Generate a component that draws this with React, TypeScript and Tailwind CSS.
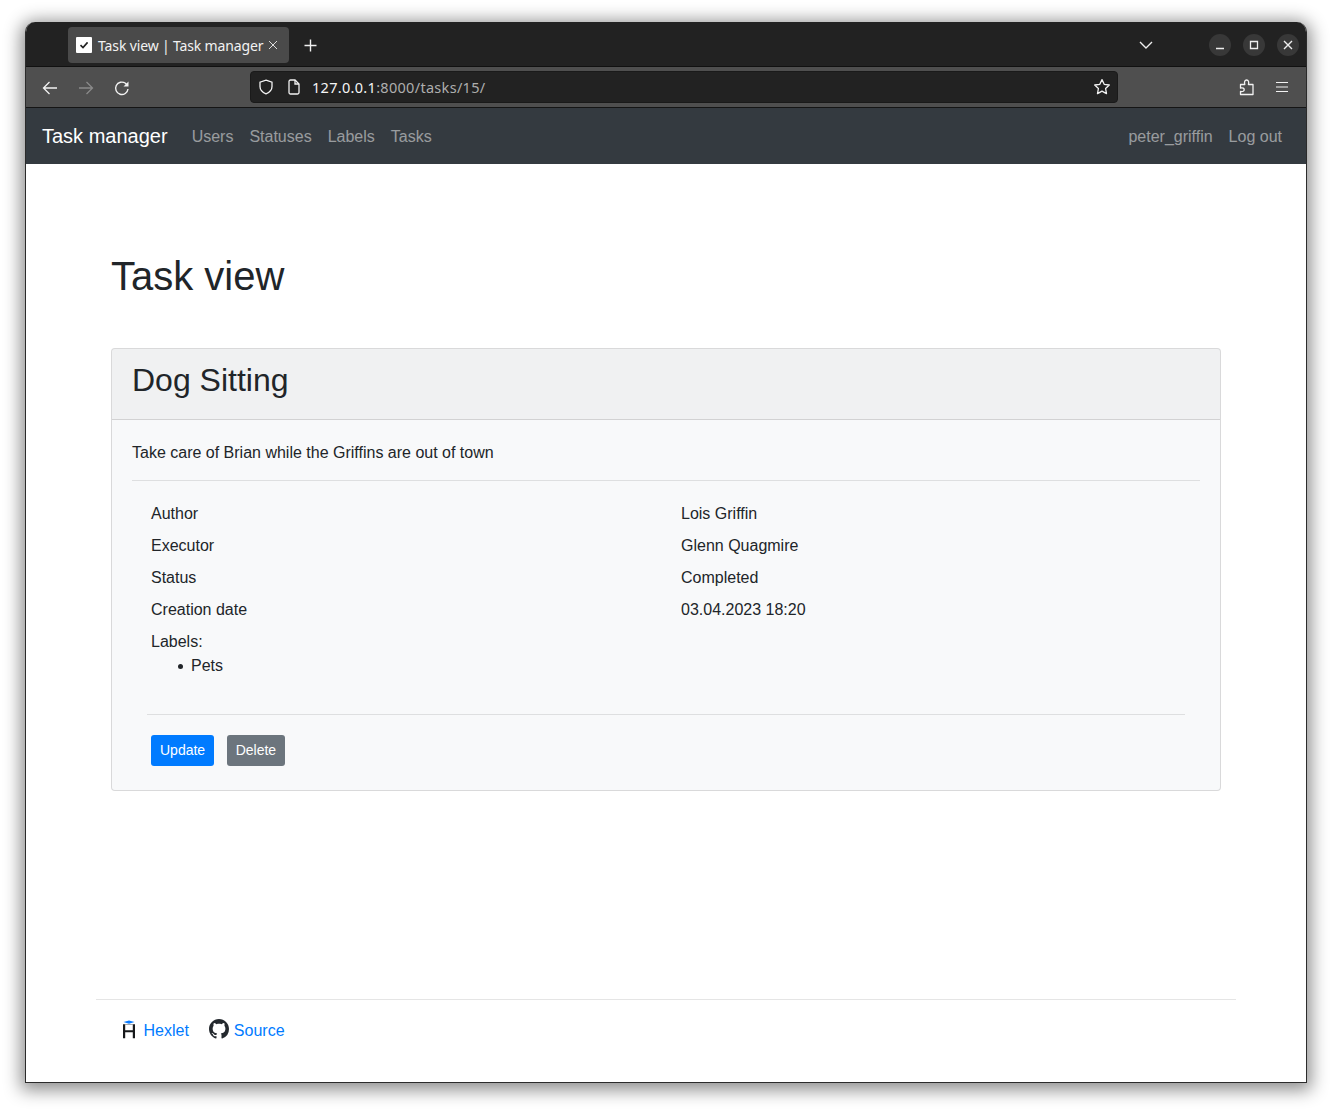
import React from "react";

const Row = ({ a, b }: { a: string; b: string }) => (
  <div className="grid grid-cols-[530px_1fr] h-8 items-center">
    <div className="pl-[4px]">{a}</div>
    <div className="pl-[4px]">{b}</div>
  </div>
);

export default function App() {
  return (
    <div className="w-[1332px] h-[1111px] bg-white pt-[22px] pl-[25px] overflow-hidden font-['Liberation_Sans',Arial,sans-serif] text-[16px] text-[#212529]">
      <div className="w-[1282px] h-[1061px] flex flex-col rounded-t-[10px] overflow-hidden border border-t-0 border-[#2b2b2b] bg-white shadow-[0_3px_17px_4px_rgba(0,0,0,0.45)]">
        {/* title bar */}
        <div className="h-[45px] shrink-0 bg-[#222222] border-b border-[#111111] flex items-start pl-[42px] relative">
          <div className="mt-[5px] w-[221px] h-[36px] rounded-[4px] bg-[#4a4a4a] flex items-center pl-[8px] text-white">
            <div className="w-4 h-4 bg-white rounded-[1px] flex items-center justify-center">
              <svg width="10" height="10" viewBox="0 0 10 10" fill="none" stroke="#222" strokeWidth="1.6"><path d="M1.5 5.2 4 7.6 8.6 2.4" /></svg>
            </div>
            <span className="ml-[6px] text-[14px] tracking-[-0.1px] [word-spacing:-0.2px] whitespace-nowrap font-['Noto_Sans',sans-serif] text-[#f2f2f2]">Task view | Task manager</span>
            <svg className="ml-[4px] -mt-[1px]" width="10" height="10" viewBox="0 0 10 10" stroke="#ddd" strokeWidth="1"><path d="M1 1l8 8M9 1 1 9" /></svg>
          </div>
          <svg className="ml-[15px] mt-[17px]" width="13" height="13" viewBox="0 0 13 13" stroke="#f0f0f0" strokeWidth="1.4"><path d="M6.5 0.5v12M0.5 6.5h12" /></svg>
          <svg className="absolute left-[1113px] top-[19px]" width="14" height="9" viewBox="0 0 14 9" fill="none" stroke="#eee" strokeWidth="1.4"><path d="M1 1l6 6 6-6" /></svg>
          <div className="absolute right-[7px] top-[12px] flex gap-[12px]">
            <div className="w-[22px] h-[22px] rounded-full bg-[#383838] flex items-center justify-center">
              <svg width="10" height="10" viewBox="0 0 10 10" stroke="#eee" strokeWidth="1.3"><path d="M1 8.5h8" /></svg>
            </div>
            <div className="w-[22px] h-[22px] rounded-full bg-[#383838] flex items-center justify-center">
              <svg width="10" height="10" viewBox="0 0 10 10" fill="none" stroke="#eee" strokeWidth="1.3"><path d="M1.5 1.5h7v7h-7z" /></svg>
            </div>
            <div className="w-[22px] h-[22px] rounded-full bg-[#383838] flex items-center justify-center">
              <svg width="10" height="10" viewBox="0 0 10 10" stroke="#eee" strokeWidth="1.4"><path d="M1 1l8 8M9 1 1 9" /></svg>
            </div>
          </div>
        </div>
        {/* toolbar */}
        <div className="h-[41px] shrink-0 bg-[#4f4f4f] border-b border-[#151515] flex items-center relative">
          <svg className="ml-[16px] mt-[1px]" width="16" height="16" viewBox="0 0 16 16" fill="none" stroke="#f2f2f2" strokeWidth="1.3"><path d="M15 8H1.5M7.5 2 1.5 8l6 6" /></svg>
          <svg className="ml-[20px] mt-[1px]" width="16" height="16" viewBox="0 0 16 16" fill="none" stroke="#8a8a8a" strokeWidth="1.3"><path d="M1 8h13.5M8.5 2l6 6-6 6" /></svg>
          <svg className="ml-[20px] mt-[1px]" width="16" height="16" viewBox="0 0 16 16" fill="none" stroke="#f2f2f2" strokeWidth="1.4"><path d="M14 9A6.2 6.2 0 1 1 11.5 3.3L13 5" /><path d="M14.5 1.5V6.5H9.5z" fill="#f2f2f2" stroke="none" /></svg>
          <div className="ml-[120px] w-[868px] h-[32px] rounded-[4px] bg-[#222222] border border-[#1a1a1a] flex items-center">
            <svg className="ml-[7px]" width="16" height="16" viewBox="0 0 16 16" fill="none" stroke="#f2f2f2" strokeWidth="1.3"><path d="M8 1.2 14 3.2v4.3c0 3.4-2.6 5.9-6 7.3-3.4-1.4-6-3.9-6-7.3V3.2z" /></svg>
            <svg className="ml-[13px]" width="14" height="16" viewBox="0 0 14 16" fill="none" stroke="#f2f2f2" strokeWidth="1.3"><path d="M2 2.5A1.5 1.5 0 0 1 3.5 1H8l4 4v8.5a1.5 1.5 0 0 1-1.5 1.5h-7A1.5 1.5 0 0 1 2 13.5z" /><path d="M8 1v4h4" /></svg>
            <span className="ml-[11px] mt-[1px] text-[14.5px] font-['Noto_Sans',sans-serif] tracking-[0.3px] text-[#f5f5f5]">127.0.0.1<span className="text-[#aeaeae]">:8000/tasks/15/</span></span>
            <svg className="ml-auto mr-[6px]" width="18" height="18" viewBox="0 0 18 18" fill="none" stroke="#f2f2f2" strokeWidth="1.3" strokeLinejoin="round"><path d="M9 1.6 11.2 6.3 16.3 7 12.6 10.5 13.5 15.6 9 13.1 4.5 15.6 5.4 10.5 1.7 7 6.8 6.3z" /></svg>
          </div>
          <svg className="ml-[121px]" width="16" height="17" viewBox="0 0 16 17" fill="none" stroke="#f2f2f2" strokeWidth="1.3" strokeLinejoin="round"><path d="M1.5 5.5H5.8C5 3 5.8 1 7.6 1S10.2 3 9.4 5.5H14V15.5H1.5V12.5C4 13 5.2 12 5.2 10.7S4 8.5 1.5 9z" /></svg>
          <svg className="ml-[21px]" width="12" height="12" viewBox="0 0 12 12" stroke="#f2f2f2" strokeWidth="1.2"><path d="M0 1.5h12M0 6h12M0 10.5h12" /></svg>
        </div>
        {/* navbar */}
        <nav className="h-[56px] shrink-0 bg-[#343a40] flex items-center pl-[16px] pr-[24px]">
          <span className="text-[20px] text-white mr-[24px]">Task manager</span>
          <div className="flex gap-[16px] text-[#ffffff80] pt-[2px]">
            <span>Users</span><span>Statuses</span><span>Labels</span><span>Tasks</span>
          </div>
          <div className="ml-auto flex gap-[16px] text-[#ffffff80] pt-[2px]">
            <span>peter_griffin</span><span>Log out</span>
          </div>
        </nav>
        {/* main */}
        <main className="flex-1 flex flex-col w-[1140px] mx-auto">
          <div className="px-[15px] pt-[88px]">
            <h1 className="text-[40px] leading-[48px] font-normal">Task view</h1>
            <div className="mt-[48px] h-[443px] bg-[#f8f9fa] border border-[#00000020] rounded-[4px] overflow-hidden">
              <div className="h-[71px] bg-[#00000008] border-b border-[#00000020] px-[20px] pt-[12px]">
                <h2 className="text-[32px] leading-[38px] font-normal">Dog Sitting</h2>
              </div>
              <div className="px-[20px] pt-[21px]">
                <p className="leading-[24px]">Take care of Brian while the Griffins are out of town</p>
                <div className="mt-[15px] border-t border-[#0000001a]" />
                <div className="mt-[17px] px-[15px]">
                  <Row a="Author" b="Lois Griffin" />
                  <Row a="Executor" b="Glenn Quagmire" />
                  <Row a="Status" b="Completed" />
                  <Row a="Creation date" b="03.04.2023 18:20" />
                  <div className="pl-[4px] pt-[4px] leading-[24px]">
                    <div>Labels:</div>
                    <ul className="pl-[26px]">
                      <li className="flex items-center gap-[8px]"><span className="w-[5px] h-[5px] ml-[1px] rounded-full bg-[#212529] mt-[1px]" />Pets</li>
                    </ul>
                  </div>
                  <div className="mt-[36px] border-t border-[#0000001a]" />
                  <div className="mt-[20px] pl-[4px] flex gap-[13px] text-[14px] text-white">
                    <div className="h-[31px] px-[9px] flex items-center rounded-[3px] bg-[#007bff]">Update</div>
                    <div className="h-[31px] px-[8.5px] flex items-center rounded-[3px] bg-[#6c757d]">Delete</div>
                  </div>
                </div>
              </div>
            </div>
          </div>
          <footer className="mt-auto h-[83px] border-t border-[#0000001a] flex items-start pl-[24px] pt-[19px] text-[#007bff]">
            <svg className="mt-[1px]" width="17" height="20" viewBox="0 0 17 20"><path d="M9 0.5l5.5 1.600-5.500 1.600-5.500-1.600z" fill="#0a7bff" /><path d="M3 4.300h2.200v6h7.600v-6H15v14h-2.200v-6H5.200v6H3z" fill="#16181a" /><path d="M5.200 4.300h7.600v0.700H5.200z" fill="#16181a" opacity="0.55" /></svg>
            <span className="ml-[6.5px]">Hexlet</span>
            <svg className="ml-[20px]" width="20" height="20" viewBox="0 0 16 16" fill="#24292e"><path d="M8 0C3.580 0 0 3.580 0 8c0 3.540 2.290 6.530 5.470 7.590.4.070.55-.17.55-.38 0-.19-.01-.82-.01-1.490-2.010.37-2.530-.49-2.690-.94-.09-.23-.48-.94-.82-1.130-.28-.15-.68-.52-.01-.53.630-.01 1.080.58 1.230.82.720 1.210 1.870.87 2.330.66.070-.52.280-.87.510-1.070-1.780-.2-3.640-.89-3.640-3.950 0-.87.310-1.590.820-2.150-.08-.2-.36-1.020.08-2.120 0 0 .67-.21 2.200.82.640-.18 1.320-.27 2-.27s1.360.09 2 .27c1.530-1.040 2.200-.82 2.200-.82.440 1.100.16 1.920.08 2.120.51.560.82 1.270.82 2.150 0 3.070-1.870 3.750-3.650 3.950.29.250.54.730.54 1.480 0 1.070-.01 1.930-.01 2.200 0 .21.150.46.550.38A8.010 8.010 0 0 0 16 8c0-4.420-3.580-8-8-8z" /></svg>
            <span className="ml-[5px]">Source</span>
          </footer>
        </main>
      </div>
    </div>
  );
}
